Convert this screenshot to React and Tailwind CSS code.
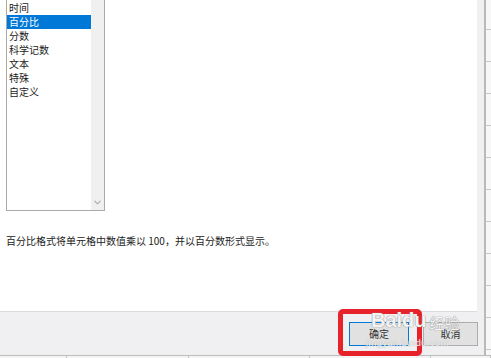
import React from 'react'

const items = ['时间', '百分比', '分数', '科学记数', '文本', '特殊', '自定义']

export default function App() {
  const rows = Array.from({ length: 12 })
  const cols = [67, 122, 121, 121, 60]
  return (
    <div className='w-[491px] h-[358px] overflow-hidden flex flex-col bg-white font-["Noto_Sans_CJK_SC",sans-serif] text-[#1a1a1a] relative'>
      <div className='flex h-[355px]'>
        {/* dialog */}
        <div className='w-[486px] flex flex-col bg-[#f0eff1] border-r-2 border-[#b9b9bb]'>
          <div className='h-[312px] mr-[7px] bg-white border-b border-[#dcdbde] pl-[6px] flex flex-col'>
            <div className='w-[99px] h-[211px] flex border-l border-r border-b border-[#aaaaaa]'>
              <div className='w-[84px] flex flex-col pt-[1px]'>
                {items.map((it, i) => (
                  <div key={it} className={`h-[14px] leading-[14px] text-[10px] pl-[2px] ${i === 1 ? 'bg-[#0078d7] text-white' : ''}`}>
                    {it}
                  </div>
                ))}
              </div>
              <div className='w-[13px] bg-[#f0f0f0] flex flex-col justify-end items-center pb-[5px]'>
                <svg width='7' height='5' viewBox='0 0 7 5'>
                  <path d='M0.5 0.8 L3.5 3.8 L6.5 0.8' fill='none' stroke='#a6a6a6' strokeWidth='1.1' />
                </svg>
              </div>
            </div>
            <div className='mt-[23px] text-[10px] leading-[14px] text-[#222]'>百分比格式将单元格中数值乘以 100，并以百分数形式显示。</div>
          </div>
          <div className='flex-1 flex items-center justify-end pr-[6px] gap-[14px] pt-[1px]'>
            <button className='w-[60px] h-[24px] bg-[#e1e1e1] border border-[#0078d7] text-[10px] leading-none text-[#333]'>确定</button>
            <button className='w-[55px] h-[24px] bg-[#e1e1e1] border border-[#adadad] text-[10px] leading-none text-[#333]'>取消</button>
          </div>
        </div>
        {/* spreadsheet strip */}
        <div className='flex-1 flex flex-col bg-[#f7f7f7] pt-[29px]'>
          {rows.map((_, i) => (
            <div key={i} className='h-[32px] shrink-0 border-t border-[#c9c9c9]' />
          ))}
        </div>
      </div>
      <div className='flex-1 flex border-t border-[#bdbdbd] bg-[#f4f4f4]'>
        {cols.map((w, i) => (
          <div key={i} style={{ width: w }} className='shrink-0 border-r border-[#c4c4c4]' />
        ))}
      </div>

      {/* red highlight */}
      <div className='absolute left-[338px] top-[309px] w-[84px] h-[47px] border-[5px] border-[#e8222b] rounded-[5px]' />

      {/* watermark */}
      <div className='absolute left-[371px] top-[310px] flex items-end gap-[3px] text-white/90 [text-shadow:0_0_1px_#8a8a8a,0_0_1px_#8a8a8a]'>
        <span className='text-[20px] font-bold leading-none font-["Liberation_Sans",sans-serif]'>Baidu</span>
        <span className='text-[15px] leading-none'>经验</span>
      </div>
      <div className='absolute left-[366px] top-[339px] text-[9px] leading-none text-white/80 [text-shadow:0_0_1px_#999] font-["Liberation_Sans",sans-serif] tracking-[0.6px]'>
        jingyan.baidu.com
      </div>
    </div>
  )
}
